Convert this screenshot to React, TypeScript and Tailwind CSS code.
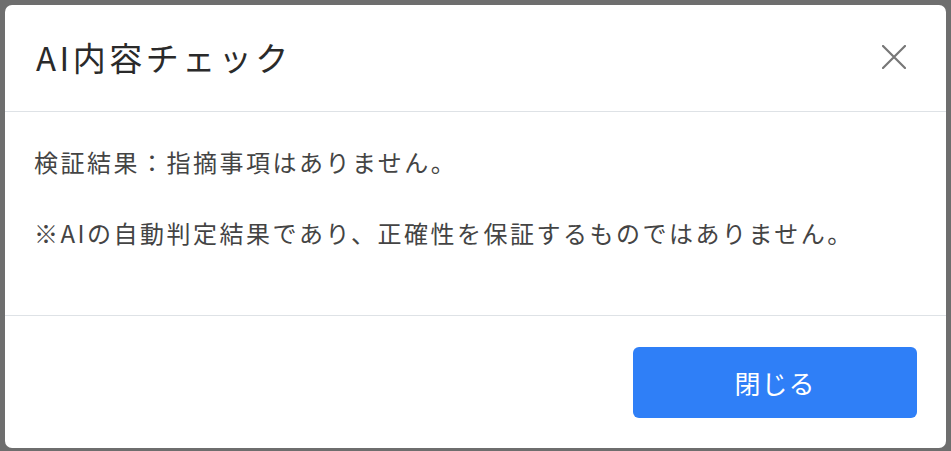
export default function App() {
  const font = { fontFamily: '"Noto Sans CJK JP", "Noto Sans", sans-serif' };
  return (
    <div className="w-[951px] h-[451px] bg-[#6e6e6e] pt-[5px] pl-[5px] overflow-hidden" style={font}>
      <div className="w-[941px] h-[443px] bg-white rounded-[7px] flex flex-col overflow-hidden">
        <div className="h-[107px] shrink-0 border-b border-[#dee2e6] flex items-center justify-between pl-[31px] pr-[40px] pb-[3px]">
          <h1 className="text-[33px] leading-[40px] tracking-[3.5px] text-[#2a2a2a] font-normal">AI内容チェック</h1>
          <button className="w-[24px] h-[24px] flex items-center justify-center text-[#777]" aria-label="close">
            <svg width="24" height="24" viewBox="0 0 24 24" fill="none" stroke="currentColor" strokeWidth="2.2" strokeLinecap="round">
              <path d="M1 1 L23 23 M23 1 L1 23" />
            </svg>
          </button>
        </div>
        <div className="h-[204px] shrink-0 border-b border-[#dee2e6] pl-[29px] pt-[32px] text-[24px] leading-[36px] tracking-[2.5px] text-[#444]">
          <p>検証結果：指摘事項はありません。</p>
          <p className="mt-[35px]">※AIの自動判定結果であり、正確性を保証するものではありません。</p>
        </div>
        <div className="flex-1 flex justify-end items-start pt-[31px] pr-[29px]">
          <button className="w-[284px] h-[71px] rounded-[6px] bg-[#2f7ff7] text-white text-[26px] tracking-[1px] flex items-center justify-center">
            閉じる
          </button>
        </div>
      </div>
    </div>
  );
}
